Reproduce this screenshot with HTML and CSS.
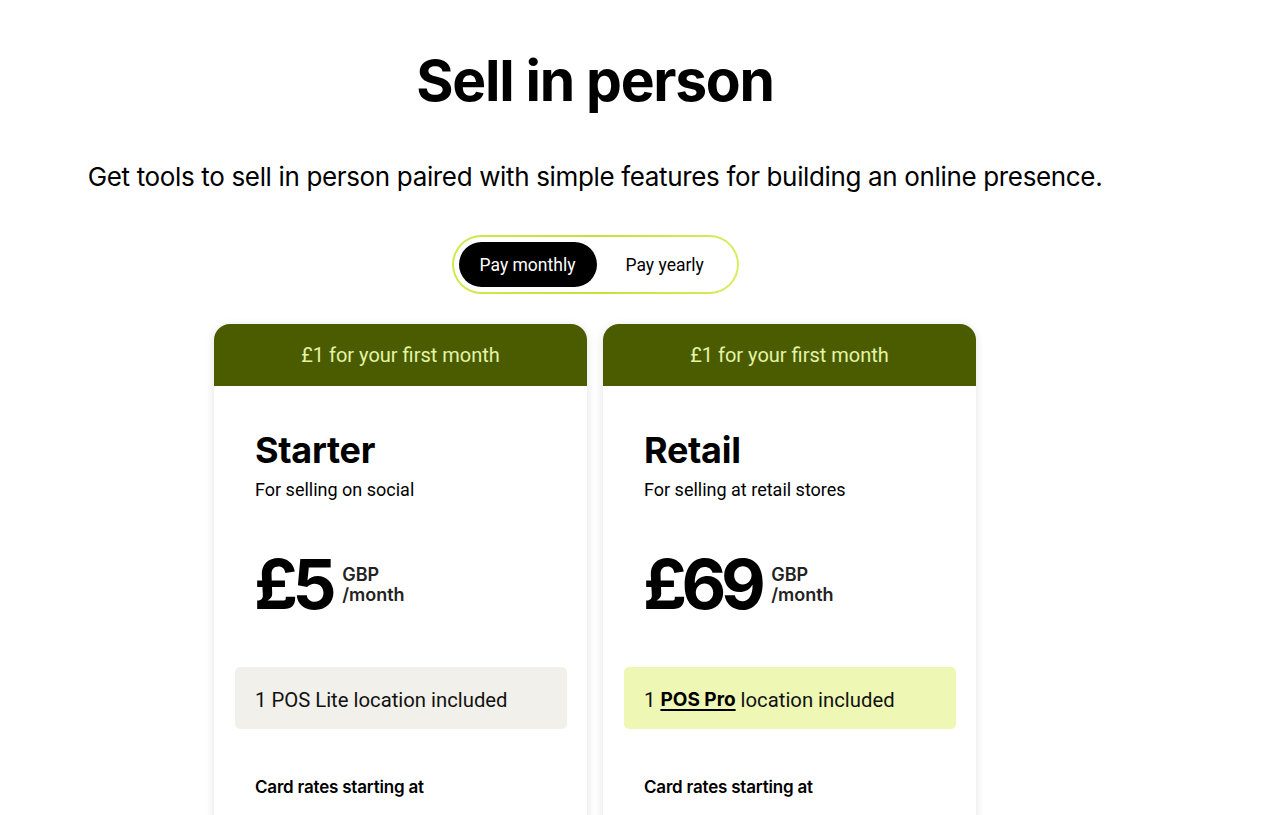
FILE: index.html
```
<!DOCTYPE html>
<html lang="en">
<head>
<meta charset="utf-8">
<title>Sell in person</title>
<link rel="stylesheet" href="styles.css">
</head>
<body>
<main class="page">
  <h1 class="title">Sell in person</h1>
  <p class="subtitle">Get tools to sell in person paired with simple features for building an online presence.</p>
  <div class="toggle-wrap">
    <div class="toggle">
      <button class="toggle-btn active">Pay monthly</button>
      <button class="toggle-btn">Pay yearly</button>
    </div>
  </div>
  <div class="cards">
    <section class="card">
      <div class="card-banner">£1 for your first month</div>
      <div class="card-body">
        <h2 class="plan-name">Starter</h2>
        <p class="plan-desc">For selling on social</p>
        <div class="price">
          <span class="amount">£5</span>
          <span class="unit"><span>GBP</span><span>/month</span></span>
        </div>
        <div class="feature feature-lite">1 POS Lite location included</div>
        <p class="rates">Card rates starting at</p>
      </div>
    </section>
    <section class="card">
      <div class="card-banner">£1 for your first month</div>
      <div class="card-body">
        <h2 class="plan-name">Retail</h2>
        <p class="plan-desc">For selling at retail stores</p>
        <div class="price">
          <span class="amount">£69</span>
          <span class="unit"><span>GBP</span><span>/month</span></span>
        </div>
        <div class="feature feature-pro">1 <a class="pro-link" href="#">POS Pro</a> location included</div>
        <p class="rates">Card rates starting at</p>
      </div>
    </section>
  </div>
</main>
</body>
</html>
```
FILE: styles.css
```
* { box-sizing: border-box; }
html, body { margin: 0; padding: 0; background: #fff; }
body {
  font-family: Inter, "Noto Sans", "Liberation Sans", sans-serif;
  color: #000;
  overflow: hidden;
}
.page {
  width: 1190px;
  display: flex;
  flex-direction: column;
  align-items: center;
}
.title {
  margin: 47px 0 0;
  font-size: 57px;
  font-weight: 700;
  line-height: 68px;
  letter-spacing: -1.3px;
}
.subtitle {
  margin: 44px 0 0;
  font-size: 26px;
  font-weight: 400;
  line-height: 36px;
  letter-spacing: -0.35px;
}
.toggle-wrap {
  margin-top: 40px;
  padding: 2px;
  border-radius: 40px;
  background: linear-gradient(90deg, #d2e84b, #c6e03a 50%, #d8ec5e);
}
.toggle {
  display: flex;
  align-items: center;
  padding: 5px;
  background: #fff;
  border-radius: 38px;
  width: 283px;
  height: 55px;
}
.toggle-btn {
  font-family: Roboto, Inter, sans-serif;
  font-size: 17.5px;
  border: 0;
  background: transparent;
  color: #000;
  height: 45px;
  padding: 0 20px;
  border-radius: 24px;
  cursor: pointer;
}
.toggle-btn.active {
  background: #000;
  color: #fff;
  width: 138px;
  margin-right: 9px;
}
.cards {
  display: flex;
  gap: 16px;
  margin-top: 30px;
}
.card {
  width: 373px;
  height: 520px;
  border-radius: 16px 16px 0 0;
  background: #fff;
  box-shadow: 0 2px 10px rgba(0,0,0,0.12);
}
.card-banner {
  height: 62px;
  background: #4b5c00;
  color: #e3f4a6;
  border-radius: 16px 16px 0 0;
  display: flex;
  align-items: center;
  justify-content: center;
  font-family: Roboto, Inter, sans-serif;
  font-size: 20px;
}
.card-body {
  padding: 43px 20px 0 21px;
}
.plan-name {
  margin: 0 0 0 20px;
  font-size: 36px;
  font-weight: 700;
  line-height: 42px;
  letter-spacing: -0.3px;
}
.plan-desc {
  margin: 7px 0 0 20px;
  font-family: Roboto, Inter, sans-serif;
  font-size: 18px;
  line-height: 24px;
}
.price {
  display: flex;
  align-items: flex-start;
  margin: 46px 0 0 19px;
}
.amount {
  font-size: 69px;
  font-weight: 700;
  line-height: 72px;
  letter-spacing: -5.5px;
}
.unit {
  display: flex;
  flex-direction: column;
  margin: 17px 0 0 11px;
  font-size: 18px;
  font-weight: 600;
  line-height: 20px;
  color: #222;
}
.feature {
  margin-top: 47px;
  height: 62px;
  border-radius: 5px;
  display: flex;
  align-items: center;
  padding: 3px 0 0 20px;
  font-family: Roboto, Inter, sans-serif;
  font-size: 20.3px;
  color: #111;
  white-space: pre;
}
.feature-lite { background: #f1f0ea; }
.feature-pro { background: #eef8b4; }
.pro-link {
  font-family: Inter, sans-serif;
  font-weight: 700;
  font-size: 19px;
  color: #000;
  text-decoration: underline;
  text-underline-offset: 3px;
  text-decoration-thickness: 2px;
}
.rates {
  margin: 48px 0 0 20px;
  font-size: 17px;
  font-weight: 600;
  letter-spacing: -0.2px;
}
```
